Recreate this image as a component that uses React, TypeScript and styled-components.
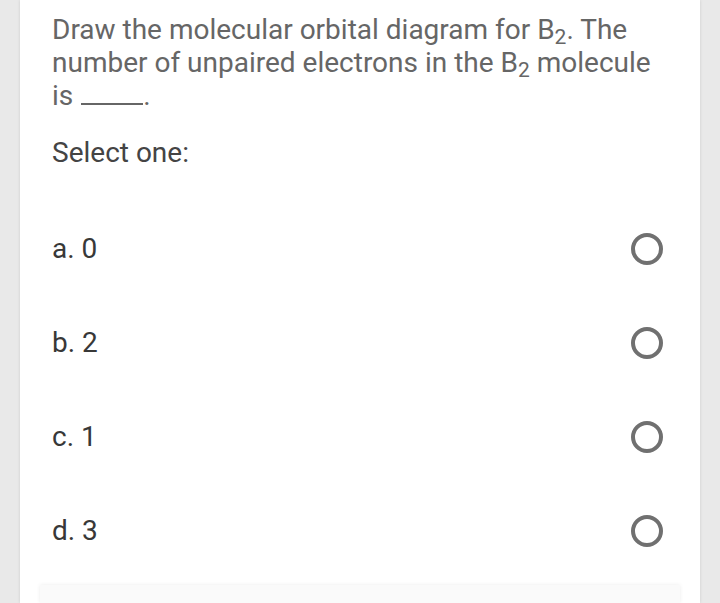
import React from "react";
import styled, { createGlobalStyle } from "styled-components";

const Global = createGlobalStyle`
  html, body { margin: 0; padding: 0; background: #e9e9e9; }
  body { font-family: Roboto, "Noto Sans", sans-serif; overflow: hidden; }
`;

const Page = styled.div`
  width: 720px;
  height: 603px;
  display: flex;
  justify-content: center;
  overflow: hidden;
`;

const Card = styled.div`
  width: 680px;
  background: #ffffff;
  box-shadow: 0 0 3px rgba(0, 0, 0, 0.12);
  padding: 13px 0 0 32px;
  box-sizing: border-box;
  display: flex;
  flex-direction: column;
`;

const Question = styled.p`
  margin: 0;
  width: 620px;
  font-size: 28px;
  line-height: 33px;
  color: #666666;
`;

const Sub = styled.sub`
  font-size: 21px;
  line-height: 0;
  vertical-align: -5px;
`;

const Blank = styled.span`
  display: inline-block;
  width: 62px;
  border-bottom: 2px solid #666666;
  margin-left: 8px;
  height: 21px;
`;

const Select = styled.div`
  margin-top: 24px;
  font-size: 28px;
  line-height: 33px;
  color: #444444;
`;

const Options = styled.div`
  margin-top: 63px;
  display: flex;
  flex-direction: column;
  gap: 61px;
  padding-right: 37px;
`;

const Option = styled.label`
  display: flex;
  align-items: center;
  justify-content: space-between;
  height: 33px;
  font-size: 28px;
  color: #383838;
`;

const Radio = styled.span`
  width: 24px;
  height: 24px;
  border: 4px solid #707070;
  border-radius: 50%;
`;

const Footer = styled.div`
  margin: 38px 20px 0 -12px;
  height: 40px;
  background: #fafafa;
  box-shadow: 0 0 4px rgba(0, 0, 0, 0.08);
`;

const options = ["a. 0", "b. 2", "c. 1", "d. 3"];

export default function App() {
  return (
    <Page>
      <Global />
      <Card>
        <Question>
          Draw the molecular orbital diagram for B<Sub>2</Sub>. The number of unpaired electrons in the B
          <Sub>2</Sub> molecule is<Blank />.
        </Question>
        <Select>Select one:</Select>
        <Options>
          {options.map((o) => (
            <Option key={o}>
              <span>{o}</span>
              <Radio />
            </Option>
          ))}
        </Options>
        <Footer />
      </Card>
    </Page>
  );
}
